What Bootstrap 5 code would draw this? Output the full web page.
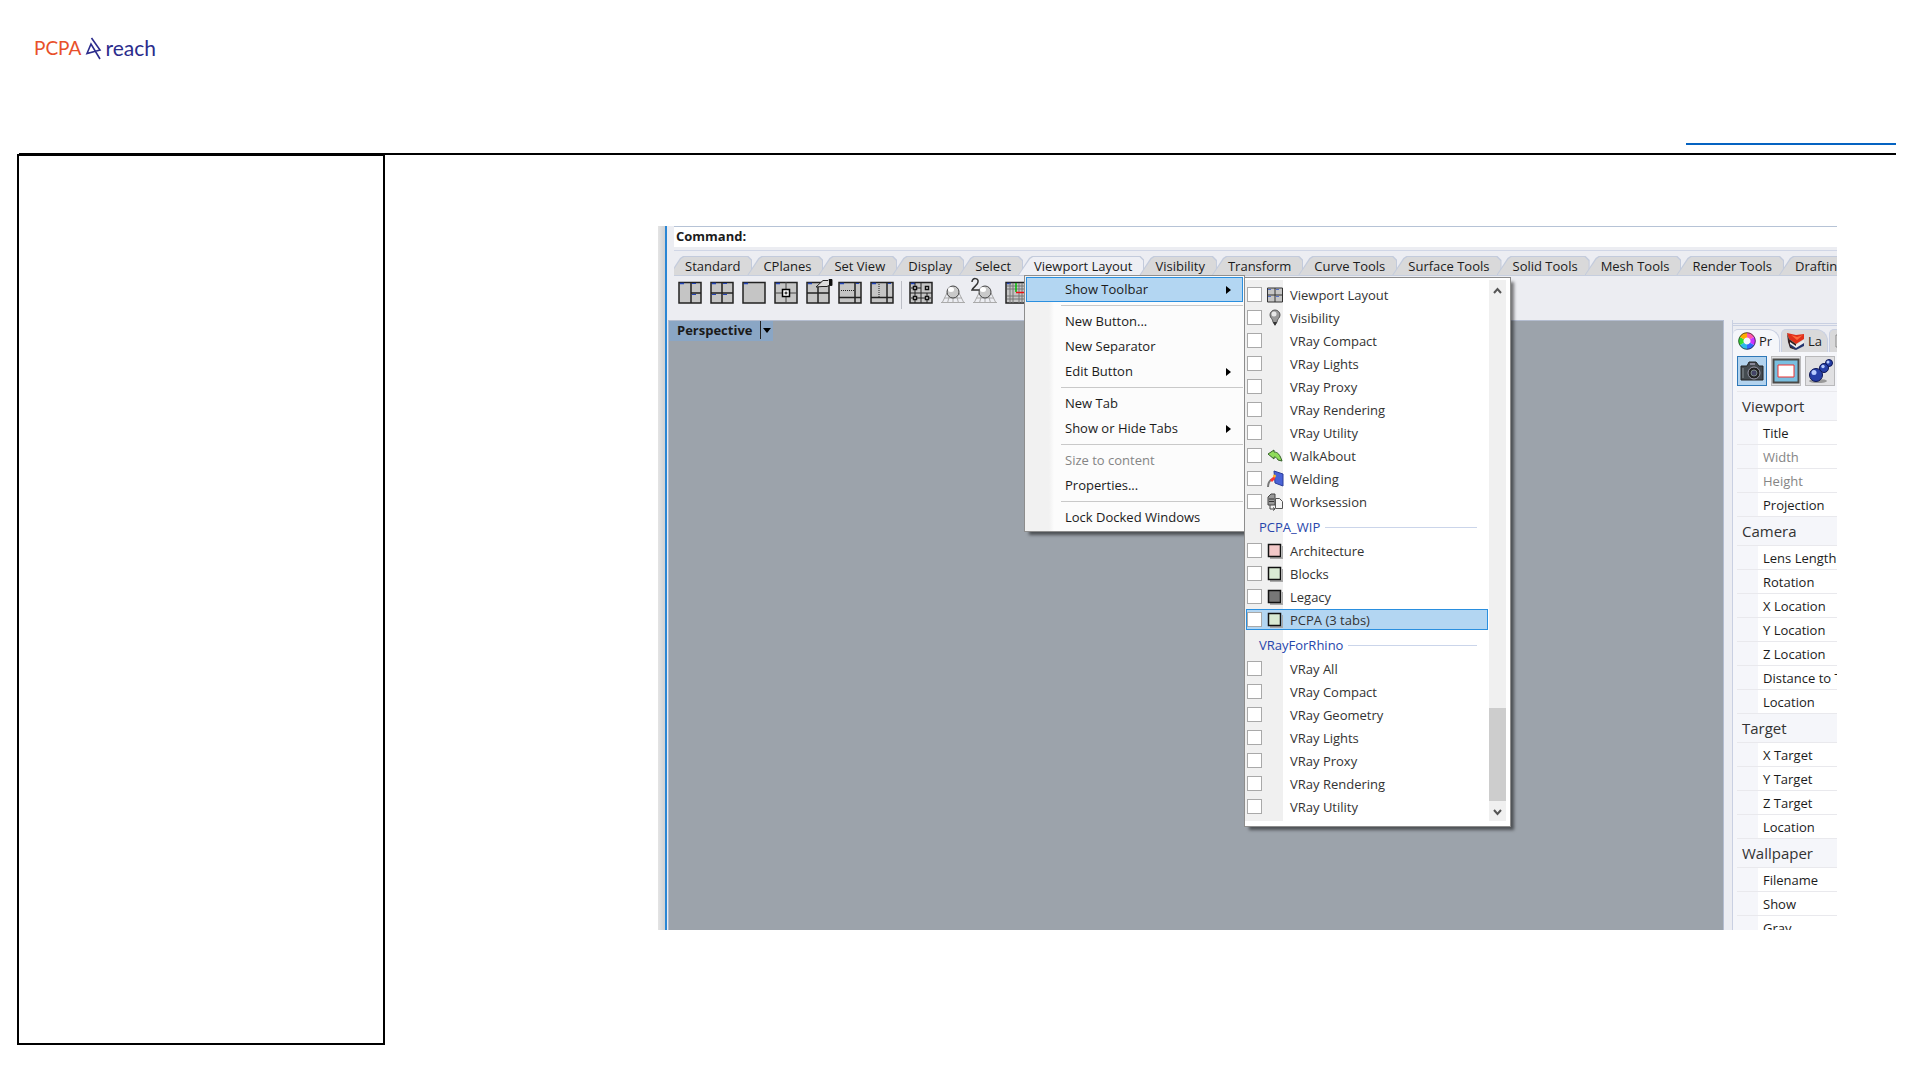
<!DOCTYPE html>
<html lang="en">
<head>
<meta charset="utf-8">
<meta name="viewport" content="width=device-width, initial-scale=1">
<title>PCPA reach</title>
<link href="https://cdn.jsdelivr.net/npm/bootstrap@5.3.0/dist/css/bootstrap.min.css" rel="stylesheet">
<style>
body{font-family:"Open Sans","Noto Sans",sans-serif;font-size:13px;line-height:20px;color:#1b1b1b;background:#fff}
button{font:inherit;color:inherit;border:0;background:none;padding:0}
.site-head{height:153px;padding:35px 24px 0 34px}
.brand{font-family:Lato,sans-serif;font-size:21px;line-height:26px;color:#2b2c8c}
.brand-a{color:#e8502a;font-size:19px}
.brand svg{width:17px;height:24px;margin:0 3px 0 4px}
.head-link{width:210px;height:2px;background:#0563c1;margin-top:108px}
.page-main{margin:0 24px 36px 17px}
.rule{height:2px;background:#000;margin-left:2px}
.side-box{width:368px;height:891px;border:2px solid #000;margin-top:-1px;flex:none}
.shot{margin:71px 59px 0 273px;height:704px;background:linear-gradient(90deg,#e4e4e4,#cfd1d4 7px,#ecedf2 7px);padding-left:7px;overflow:hidden}
.app{border-left:2px solid #2a86d4}
.cmd{height:21px;margin-left:7px;border-top:1px solid #b6c3d6;background:#fff;font-weight:700;padding-left:2px;line-height:18px}
.tabstrip{height:29px;margin-left:7px;padding-top:9px;border-bottom:1px solid #c6cede;overflow:hidden;background:linear-gradient(#ecedf2 3px,#d0d6e6 3px,#d0d6e6 4px,#ecedf2 4px)}
.tab-item{position:relative;height:19px;line-height:20px;padding:0 12px 0 16px;margin-left:-5px;white-space:nowrap;flex:none;isolation:isolate}
.tab-item::before,.tab-item::after{content:"";position:absolute;inset:0;background:#c3cbdc;z-index:-1;clip-path:polygon(0 100%,11px 2px,14px 0,calc(100% - 4px) 0,100% 4px,100% 100%)}
.tab-item::after{inset:1px 1px 0 1px;background:#d9d9da}
.tab-item.active::after{background:#eeeff4}
.tools{height:44px;padding:5px 0 0 11px}
.tools button,.tools svg{display:block;width:24px;height:24px;overflow:visible}
.tool-sep{width:1px;height:28px;background:#bcbec6;margin:0 -1px}
.view{background:#9ca3ab;border:1px solid #b4bdd0;border-width:1px 1px 0;margin-left:1px;min-width:0}
.view-name{width:104px;height:20px;background:#8aa6c5;font-weight:700;padding-left:8px;line-height:19px}
.view-name i{border-left:1px solid #222;height:18px;width:13px;display:flex;align-items:center;padding-left:2px}
.view-name i::after{content:"";border:4px solid transparent;border-top:5px solid #000;border-bottom:0}
.dock{width:113px;padding-left:8px;flex:none;overflow:hidden}
.dock-in{border-left:1px solid #c9d0e2;height:100%;white-space:nowrap;overflow:hidden;background:#f5f6fa}
.dock-tabs{height:32px;padding-top:9px;background:linear-gradient(#ecedf2 3px,#c9d0e2 3px,#c9d0e2 4px,#ecedf2 4px,#ecedf2 5px,#c9d0e2 5px,#c9d0e2 6px,#ecedf2 6px)}
.dock-tab{height:23px;width:47px;flex:none;display:flex;align-items:center;gap:3px;padding-left:5px;border:1px solid #c9d0e2;border-bottom:0;border-radius:5px 12px 0 0;background:#d9d9da;margin-right:1px}
.dock-tab.active{background:#f5f6fa;border-left:0}
.dock-tab svg{width:18px;height:18px;flex:none}
.dock-btns{gap:4px;padding:4px 0 5px 4px;height:39px}
.dock-btns button{width:30px;height:30px;flex:none;border:1px solid #b9b9bb;background:#e0e0e2}
.dock-btns button.on{background:#b3d3ee;border-color:#2f78b8}
.dock-btns svg{display:block;width:28px;height:28px}
.props{margin-left:4px;width:160px;border-collapse:collapse;background:#fff}
.props th{font-weight:400;padding:0 0 0 5px;height:24px;line-height:20px;border-top:1px solid #e9e9ed}
.props th.off{color:#858585}
.props td{width:21px;padding:0;background:#f5f6fa;border-top:1px solid #e9e9ed}
.props .group th{height:29px;font-size:15px;background:#f5f6fa;color:#333}
.menu{position:absolute;background:#fcfcfc;border:1px solid #8d8d8d;box-shadow:4px 4px 3px -1px rgba(0,0,0,.5)}
.menu-a{left:357px;top:49px;width:221px;padding:1px}
.menu-a{background:linear-gradient(90deg,#f1f1f1 0,#f1f1f1 24px,#fcfcfc 29px)}
.menu-a button{display:flex;align-items:center;justify-content:space-between;width:100%;height:25px;padding:0 12px 0 39px;text-align:left;line-height:23px}
.menu-a button.hot{background:#b3d6f2;border:1px solid #2a8fdf;padding:0 11px 0 38px}
.menu-a button:disabled{color:#858585}
.menu-a .has-sub::after{content:"";border:4px solid transparent;border-left:5px solid #000;border-right:0}
.menu-a hr{margin:3px 0 3px 35px;border:0;height:1px;background:#c9c9c9;opacity:1}
.menu-b{left:577px;top:51px;width:267px;height:550px;padding:2px 4px 5px 0;background:#fff}
.entries{background:linear-gradient(90deg,#f0f0f0 38px,#fff 38px);padding-top:3px;color:#333}
.entry{display:flex;align-items:center;height:23px;padding-left:2px;margin-right:1px}
.entry input{appearance:none;width:15px;height:15px;border:1px solid #a9a9a9;background:#fff;margin:0 5px 0 0;flex:none}
.entry svg{width:16px;height:16px;margin-right:7px;flex:none;overflow:visible}
.entry.hot{background:#b3d6f2;box-shadow:inset 0 0 0 1px #2a8fdf;height:21px;margin:1px 1px 1px 1px;padding-left:1px}
.entry-head{display:flex;align-items:center;height:26px;padding:2px 12px 0 14px;gap:5px;color:#2746ac}
.entry-head::after{content:"";height:1px;background:#cbd5ea;flex:1}
.scroller{width:17px;background:#f0f0f0}
.scroller svg{width:17px;height:20px;display:block}
.thumb{height:93px;background:#cdcdcd}
</style>
<script src="https://cdn.jsdelivr.net/npm/bootstrap@5.3.0/dist/js/bootstrap.bundle.min.js"></script>
</head>
<body>
<svg width="0" height="0" class="position-absolute" aria-hidden="true">
  <symbol id="frame" viewBox="0 0 24 24"><path d="M1 1.500h22v20.500H1z" fill="#c5c5c5" stroke="#222" stroke-width="1.500"/><path d="M2 2.500h4" stroke="#2344b8" stroke-width="1.500"/></symbol>
  <symbol id="swatch" viewBox="0 0 16 16"><path d="M3 15h13V3" fill="none" stroke="#aaa" stroke-width="2"/><path d="M1.500 1.500h12v12h-12z" fill="currentColor" stroke="#111" stroke-width="1.500"/></symbol>
  <symbol id="ball" viewBox="0 0 24 24"><path d="M5 13h14M3 17h18M0 21.500h24M6 12 1 22M9 12 6.500 22M12 12v10M15 12l2.500 10M18 12l5 10" stroke="#aaa" fill="none"/><circle cx="12" cy="11" r="6" fill="#c9c9c9" stroke="#444"/><ellipse cx="10" cy="8.500" rx="3" ry="2.500" fill="#fff"/></symbol>
</svg>

<header class="site-head d-flex justify-content-between">
  <a href="#" class="brand d-flex align-self-start align-items-center text-decoration-none"><span class="brand-a">PCPA</span>
    <svg viewBox="0 0 17 24" fill="none" stroke="#2b2c8c" stroke-width="1.600"><path d="M6.500 2 15 14 2 17.500 6 8l9 15"/></svg><span>reach</span></a>
  <a href="#" class="head-link" aria-label="Page link"></a>
</header>

<main class="page-main">
  <div class="rule"></div>
  <div class="d-flex align-items-start">
    <aside class="side-box"></aside>
    <section class="shot flex-grow-1">
      <div class="app position-relative d-flex flex-column h-100">
        <div class="cmd flex-shrink-0">Command:</div>
        <nav class="tabstrip d-flex flex-shrink-0">
          <button class="tab-item">Standard</button><button class="tab-item">CPlanes</button><button class="tab-item">Set View</button><button class="tab-item">Display</button><button class="tab-item">Select</button><button class="tab-item active">Viewport Layout</button><button class="tab-item">Visibility</button><button class="tab-item">Transform</button><button class="tab-item">Curve Tools</button><button class="tab-item">Surface Tools</button><button class="tab-item">Solid Tools</button><button class="tab-item">Mesh Tools</button><button class="tab-item">Render Tools</button><button class="tab-item">Drafting</button>
        </nav>
        <div class="tools d-flex gap-2 flex-shrink-0">
          <button aria-label="Three viewports"><svg viewBox="0 0 24 24"><use href="#frame"/><path d="M13 1v21M13 12h10" stroke="#222" stroke-width="1.500"/><path d="M14 2.500h4M14 13.500h4" stroke="#2344b8"/></svg></button>
          <button aria-label="Four viewports"><svg viewBox="0 0 24 24"><use href="#frame"/><path d="M12 1v21M1 12h22" stroke="#222" stroke-width="1.500"/><path d="M13 2.500h4M13 13.500h4M2 13.500h4" stroke="#2344b8"/></svg></button>
          <button aria-label="Maximize viewport"><svg viewBox="0 0 24 24"><use href="#frame"/></svg></button>
          <button aria-label="New viewport"><svg viewBox="0 0 24 24"><use href="#frame"/><path d="M12 1v21M1 12h22" stroke="#444"/><path d="M8.500 8.500h7v7h-7z" fill="#fff" stroke="#000" stroke-width="1.500"/><path d="M10.500 12h3M12 10.500v3" stroke="#000"/></svg></button>
          <button aria-label="Viewport properties"><svg viewBox="0 0 24 24"><use href="#frame"/><path d="M12 6v16M1 12h22" stroke="#222" stroke-width="1.500"/><path d="M10 6 17-.5h5l1-1h3v6h-3l-2 1h-5z" fill="#ddd" stroke="#222"/><path d="M23-2h3v6h-3z" fill="#111"/></svg></button>
          <button aria-label="Split horizontal"><svg viewBox="0 0 24 24"><use href="#frame"/><path d="M17 1v21M1 16.500h22" stroke="#222" stroke-width="1.500"/><path d="M3 9.500h13" stroke="#222" stroke-dasharray="1 1"/><path d="M18 2.500h3" stroke="#2344b8"/></svg></button>
          <button aria-label="Split vertical"><svg viewBox="0 0 24 24"><use href="#frame"/><path d="M17 1v21M1 16.500h22" stroke="#222" stroke-width="1.500"/><path d="M9 3v13" stroke="#222" stroke-dasharray="1 1"/><path d="M18 2.500h3" stroke="#2344b8"/></svg></button>
          <span class="tool-sep"></span>
          <button aria-label="Link viewports"><svg viewBox="0 0 24 24"><use href="#frame"/><path d="M12 1v21M1 12h22M6 2v20M18 12v10M2 7h10M2 17h20" stroke="#222"/><path d="M4.500 5.500h3v3h-3zM16.500 5.500h3v3h-3zM4.500 15.500h3v3h-3zM16.500 15.500h3v3h-3z" fill="#fff" stroke="#111" stroke-width="1.500"/></svg></button>
          <button aria-label="Perspective view"><svg><use href="#ball"/></svg></button>
          <button aria-label="Two point perspective"><svg viewBox="0 0 24 24"><use href="#ball" width="24" height="24"/><path d="M-1 1c0-5 7-4 6 0 0 3-5 5-6 8h7" stroke="#333" stroke-width="1.500" fill="none"/></svg></button>
          <button aria-label="Plan view"><svg viewBox="0 0 24 24"><use href="#frame"/><path d="M5 2v20M8 2v20M14 2v20M17 2v20M20 2v20M2 5h20M2 8h20M2 15h20M2 18h20" stroke="#777"/><path d="M11 2v9" stroke="#0b0" stroke-width="1.500"/><path d="M11 11.500h12" stroke="#e11" stroke-width="1.500"/></svg></button>
        </div>
        <div class="d-flex flex-grow-1 overflow-hidden">
          <div class="view flex-grow-1"><div class="view-name d-flex justify-content-between">Perspective<i></i></div></div>
          <aside class="dock"><div class="dock-in">
            <div class="dock-tabs d-flex">
              <button class="dock-tab active"><svg viewBox="0 0 18 18" fill="none" stroke-width="5"><path d="M9 3a6 6 0 0 1 5.200 3" stroke="#f5a"/><path d="M14.200 6a6 6 0 0 1 0 6" stroke="#c3f"/><path d="M14.200 12A6 6 0 0 1 9 15" stroke="#36f"/><path d="M9 15a6 6 0 0 1-5.200-3" stroke="#2cb8e8"/><path d="M3.800 12a6 6 0 0 1 0-6" stroke="#3d3"/><path d="M3.800 6A6 6 0 0 1 9 3" stroke="#fa0"/><circle cx="9" cy="9" r="8.300" stroke="#222" stroke-width=".7"/></svg>Pr</button>
              <button class="dock-tab"><svg viewBox="0 0 18 18"><path d="M1 7 9 14l8-5v5l-8 4-6-3z" fill="#23346e"/><path d="M2 7l7 6 8-5v3l-8 5-6-4z" fill="#eee"/><path d="M0 1 9 3l8-1v5l-8 5-7-5z" fill="#e0301a"/><path d="M4 3l6 2 6-2-6 5z" fill="#ff6a3a"/><path d="M0 1l2 6 7 5v2L3 10v4l6 4-6-2-2-6z" fill="#322"/></svg>La</button>
              <button class="dock-tab" aria-label="More"><svg viewBox="0 0 18 18"><path d="M1 3h14v12H1z" fill="#eee" stroke="#888"/></svg></button>
            </div>
            <div class="dock-btns d-flex">
              <button class="on" aria-label="Viewport"><svg viewBox="0 0 28 28"><path d="M3 9h6l2-4h7l3 4h4v14H3z" fill="#444b50" stroke="#222"/><path d="M12 6h5v2h-5z" fill="#889"/><circle cx="16" cy="16" r="6" fill="#222" stroke="#99a"/><circle cx="16" cy="16" r="3" fill="#446" stroke="#7a8a88"/><path d="M5 11v10" stroke="#8a9296"/></svg></button>
              <button aria-label="Wallpaper"><svg viewBox="0 0 28 28"><path d="M1.500 2.500h25v23h-25z" fill="#79bfe0" stroke="#4a4a48" stroke-width="2"/><path d="M6 8h16v12H6z" fill="#fff" stroke="#e33"/></svg></button>
              <button aria-label="Material"><svg viewBox="0 0 28 28" fill="#2740a8" stroke="#0c1555"><ellipse cx="12" cy="24" rx="9" ry="2" fill="#999" stroke="none"/><circle cx="23" cy="6" r="3.500"/><circle cx="18" cy="11" r="4.500"/><circle cx="10" cy="18" r="6.500"/><g fill="#b8ccff" stroke="none"><circle cx="22" cy="5" r="1.500"/><circle cx="17" cy="9.500" r="1.700"/><circle cx="8" cy="15.500" r="2.500"/></g></svg></button>
            </div>
            <table class="props">
              <tr class="group"><th colspan="2">Viewport</th></tr>
              <tr><td></td><th>Title</th></tr><tr><td></td><th class="off">Width</th></tr><tr><td></td><th class="off">Height</th></tr><tr><td></td><th>Projection</th></tr>
              <tr class="group"><th colspan="2">Camera</th></tr>
              <tr><td></td><th>Lens Length</th></tr><tr><td></td><th>Rotation</th></tr><tr><td></td><th>X Location</th></tr><tr><td></td><th>Y Location</th></tr><tr><td></td><th>Z Location</th></tr><tr><td></td><th>Distance to Target</th></tr><tr><td></td><th>Location</th></tr>
              <tr class="group"><th colspan="2">Target</th></tr>
              <tr><td></td><th>X Target</th></tr><tr><td></td><th>Y Target</th></tr><tr><td></td><th>Z Target</th></tr><tr><td></td><th>Location</th></tr>
              <tr class="group"><th colspan="2">Wallpaper</th></tr>
              <tr><td></td><th>Filename</th></tr><tr><td></td><th>Show</th></tr><tr><td></td><th>Gray</th></tr>
            </table>
          </div></aside>
        </div>

        <div class="menu menu-a">
          <button class="hot has-sub">Show Toolbar</button><hr>
          <button>New Button...</button><button>New Separator</button><button class="has-sub">Edit Button</button><hr>
          <button>New Tab</button><button class="has-sub">Show or Hide Tabs</button><hr>
          <button disabled>Size to content</button><button>Properties...</button><hr>
          <button>Lock Docked Windows</button>
        </div>

        <div class="menu menu-b d-flex">
          <div class="entries flex-grow-1">
            <label class="entry"><input type="checkbox"><svg viewBox="0 0 16 16"><path d="M.5 1h15v14H.5zM8 1v14M.5 8h15" fill="#c5c5c5" stroke="#333"/><path d="M1 2.500h3M9 2.500h3M1 9.500h3M9 9.500h3" stroke="#5570c8"/></svg>Viewport Layout</label>
            <label class="entry"><input type="checkbox"><svg viewBox="0 0 16 16"><path d="M8 0a5 5 0 0 1 5 5c0 3-3 4-3 7l-2 3-2-3c0-3-3-4-3-7a5 5 0 0 1 5-5z" fill="#999" stroke="#555"/><path d="M6 12h4l-2 4z" fill="#333"/><circle cx="7" cy="4" r="2.500" fill="#e8e8e8"/></svg>Visibility</label>
            <label class="entry"><input type="checkbox"><svg></svg>VRay Compact</label>
            <label class="entry"><input type="checkbox"><svg></svg>VRay Lights</label>
            <label class="entry"><input type="checkbox"><svg></svg>VRay Proxy</label>
            <label class="entry"><input type="checkbox"><svg></svg>VRay Rendering</label>
            <label class="entry"><input type="checkbox"><svg></svg>VRay Utility</label>
            <label class="entry"><input type="checkbox"><svg viewBox="0 0 16 16"><path d="M1 6l6-4v2c4 0 6 3 8 9l-4-1c-1-2-2-3-4-3v2z" fill="#8fdc5a" stroke="#35622a"/></svg>WalkAbout</label>
            <label class="entry"><input type="checkbox"><svg viewBox="0 0 16 16"><path d="M7 0l9 3v12l-8-3z" fill="#4a63d6" stroke="#2b3d9a"/><path d="M1 16c0-4 1-6 4-8" stroke="#777" stroke-width="2" fill="none"/><path d="M3 9l5-5v4l-3 3z" fill="#f33"/><circle cx="7.500" cy="5" r="1.500" fill="#ffb42a"/></svg>Welding</label>
            <label class="entry"><input type="checkbox"><svg viewBox="0 0 16 16"><path d="M1 3l3-3h4v11H1z" fill="#999" stroke="#444"/><path d="M2 5h5M2 7.500h5" stroke="#333"/><path d="M8.500 4.500h4l3 3v7h-7z" fill="#f4f4f4" stroke="#555"/><path d="M3 11v4h4M6 13.500l2 1.500-2 1.500" fill="none" stroke="#444"/></svg>Worksession</label>
            <div class="entry-head">PCPA_WIP</div>
            <label class="entry"><input type="checkbox"><svg color="#f3c9c9"><use href="#swatch"/></svg>Architecture</label>
            <label class="entry"><input type="checkbox"><svg color="#d9ead3"><use href="#swatch"/></svg>Blocks</label>
            <label class="entry"><input type="checkbox"><svg color="#777"><use href="#swatch"/></svg>Legacy</label>
            <label class="entry hot"><input type="checkbox"><svg color="#d9ead3"><use href="#swatch"/></svg>PCPA (3 tabs)</label>
            <div class="entry-head">VRayForRhino</div>
            <label class="entry"><input type="checkbox"><svg></svg>VRay All</label>
            <label class="entry"><input type="checkbox"><svg></svg>VRay Compact</label>
            <label class="entry"><input type="checkbox"><svg></svg>VRay Geometry</label>
            <label class="entry"><input type="checkbox"><svg></svg>VRay Lights</label>
            <label class="entry"><input type="checkbox"><svg></svg>VRay Proxy</label>
            <label class="entry"><input type="checkbox"><svg></svg>VRay Rendering</label>
            <label class="entry"><input type="checkbox"><svg></svg>VRay Utility</label>
          </div>
          <div class="scroller d-flex flex-column">
            <svg viewBox="0 0 17 20" fill="none" stroke="#555" stroke-width="2"><path d="M5 13l3.500-4 3.500 4"/></svg>
            <div class="thumb mt-auto"></div>
            <svg viewBox="0 0 17 20" fill="none" stroke="#555" stroke-width="2"><path d="M5 9l3.500 4L12 9"/></svg>
          </div>
        </div>
      </div>
    </section>
  </div>
</main>
</body>
</html>
